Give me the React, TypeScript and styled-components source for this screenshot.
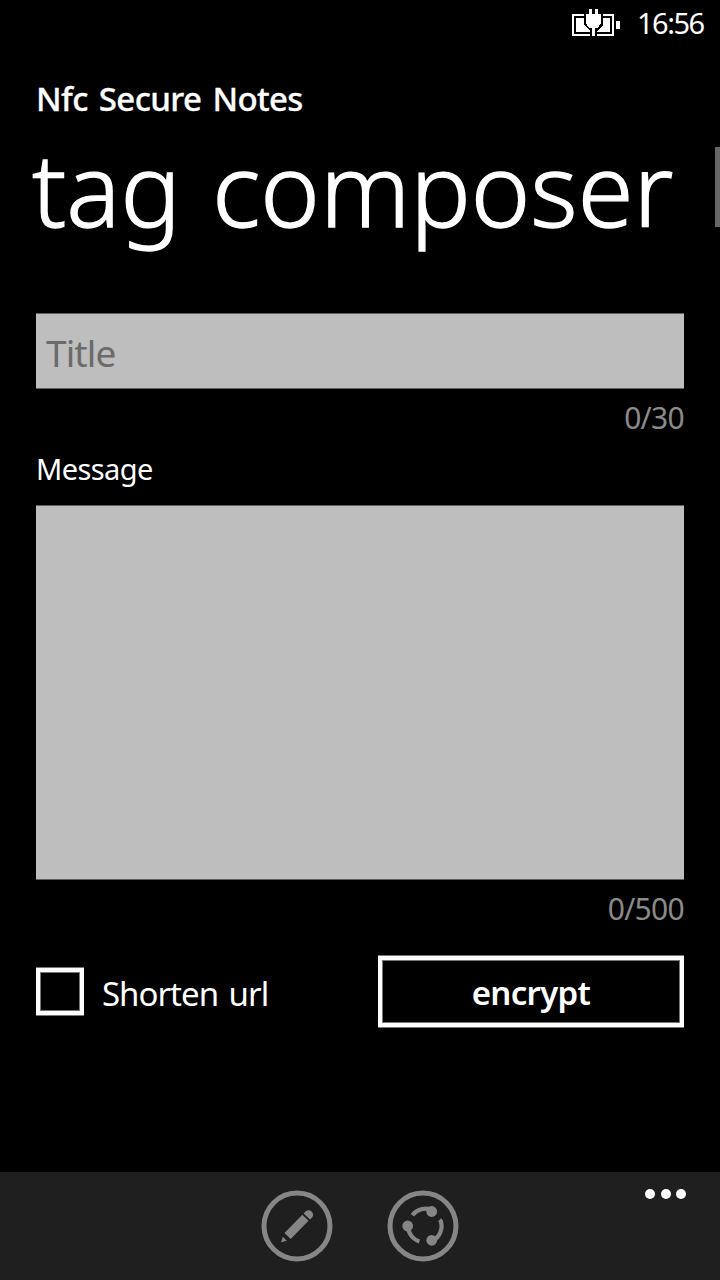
import React from "react";
import styled, { createGlobalStyle } from "styled-components";

const Global = createGlobalStyle`
  * { box-sizing: border-box; }
  body { margin: 0; background: #000; }
`;

const Page = styled.div`
  width: 720px;
  height: 1280px;
  display: flex;
  flex-direction: column;
  background: #000;
  color: #fff;
  overflow: hidden;
  font-family: "Noto Sans", "Open Sans", sans-serif;
  white-space: nowrap;
`;

const StatusBar = styled.header`
  display: flex;
  justify-content: flex-end;
  align-items: flex-start;
  height: 76px;
  padding-right: 16px;
`;

const BatteryIcon = styled.svg`
  display: block;
  margin: 8px 17px 0 0;
`;

const Clock = styled.time`
  width: 67px;
  font-size: 29px;
  line-height: 45px;
  letter-spacing: -1.5px;
`;

const AppName = styled.div`
  padding-left: 36px;
  font-size: 33px;
  font-weight: 500;
  line-height: 45px;
  letter-spacing: -0.6px;
  word-spacing: 3px;
  -webkit-text-stroke: 0.3px #fff;
`;

const TitleRow = styled.div`
  display: flex;
  justify-content: space-between;
  align-items: flex-start;
  height: 192px;
  padding-left: 32px;
`;

const PageTitle = styled.h1`
  margin: 2px 0 0;
  font-size: 101px;
  font-weight: 300;
  line-height: 130px;
  word-spacing: 5px;
  -webkit-text-stroke: 1.3px #fff;
`;

const NextPeek = styled.div`
  width: 5px;
  height: 80px;
  margin-top: 26px;
  background: #666;
`;

const Form = styled.main`
  flex: 1;
  display: flex;
  flex-direction: column;
  padding: 0 36px;
`;

const TitleInput = styled.input`
  width: 100%;
  height: 76px;
  padding: 2px 10px 0;
  border: solid #5f5f5f;
  border-width: 1px 0;
  border-radius: 0;
  background: #bebebe;
  color: #000;
  font: 37px "Noto Sans", sans-serif;
  letter-spacing: -0.9px;
  &::placeholder { color: #6b6b6b; opacity: 1; }
`;

const MessageInput = styled.textarea`
  display: block;
  width: 100%;
  height: 375px;
  border: solid #5f5f5f;
  border-width: 1px 0;
  border-radius: 0;
  background: #bebebe;
  resize: none;
`;

const Counter = styled.div`
  height: 56px;
  line-height: 58px;
  text-align: right;
  font-size: 30px;
  letter-spacing: -0.7px;
  color: #8a8a8a;
`;

const Label = styled.label`
  height: 60px;
  line-height: 48px;
  font-size: 29px;
  letter-spacing: -0.6px;
`;

const Actions = styled.div`
  display: flex;
  justify-content: space-between;
  align-items: center;
  height: 73px;
  margin-top: 19px;
`;

const CheckOption = styled.label`
  display: flex;
  align-items: center;
  gap: 18px;
`;

const CheckText = styled.span`
  padding-top: 4px;
  font-size: 33px;
  line-height: 44px;
  letter-spacing: -1px;
  word-spacing: 3px;
`;

const CheckBox = styled.span`
  width: 48px;
  height: 47px;
  border: 4px solid #fff;
  box-shadow: 0 -1px #777, 0 1px #777, inset 0 0 0 1px #777;
`;

const Button = styled.button`
  width: 306px;
  height: 71px;
  padding: 2px 0 0;
  border: 4px solid #fff;
  box-shadow: 0 -1px #777, 0 1px #777, inset 0 0 0 1px #777;
  background: #000;
  color: #fff;
  font: 600 33px "Noto Sans", sans-serif;
  letter-spacing: -0.7px;
`;

const AppBar = styled.footer`
  position: relative;
  display: flex;
  justify-content: center;
  gap: 54px;
  height: 108px;
  padding-top: 18px;
  background: #1f1f1f;
`;

const BarIcon = styled.svg`
  width: 72px;
  height: 72px;
`;

const More = styled.div`
  position: absolute;
  top: 17px;
  right: 34px;
  display: flex;
  gap: 5.5px;
`;

const Dot = styled.span`
  width: 10px;
  height: 10px;
  border-radius: 50%;
  background: #fff;
`;

const ICON = "#868686";

export default function App() {
  return (
    <Page>
      <Global />
      <StatusBar>
        <BatteryIcon width="50" height="30" viewBox="0 0 50 30" shapeRendering="crispEdges">
          <path d="M3 7h40v20H3z" fill="none" stroke="#fff" strokeWidth="2" />
          <path d="M6 10h34v14H6zM46 13h4v8h-4z" fill="#fff" />
          <path d="M14 4h19v13l-6 6v5h-7v-5l-6-6z" fill="#000" />
          <path d="M19 1h3v5h3V1h3v5h3v9l-3 5h-3v8h-3v-8h-3l-3-5V6h3z" fill="#fff" />
        </BatteryIcon>
        <Clock>16:56</Clock>
      </StatusBar>
      <AppName>Nfc Secure Notes</AppName>
      <TitleRow>
        <PageTitle>tag composer</PageTitle>
        <NextPeek />
      </TitleRow>
      <Form>
        <TitleInput placeholder="Title" />
        <Counter>0/30</Counter>
        <Label htmlFor="message">Message</Label>
        <MessageInput id="message" />
        <Counter>0/500</Counter>
        <Actions>
          <CheckOption>
            <CheckBox />
            <CheckText>Shorten url</CheckText>
          </CheckOption>
          <Button>encrypt</Button>
        </Actions>
      </Form>
      <AppBar>
        <BarIcon viewBox="0 0 72 72" fill={ICON}>
          <circle cx="36" cy="36" r="33" fill="none" stroke={ICON} strokeWidth="5" />
          <path d="M41.3 24.7l6.2 6L29.7 49l-6.2-6z" />
          <path d="M21.9 46.8l3.9 4L20 52.2z" />
          <path d="M42.6 23.4l2.4-2.4a4.6 4.6 0 0 1 6.4 6.2l-2.4 2.4z" />
        </BarIcon>
        <BarIcon viewBox="0 0 72 72" fill={ICON}>
          <circle cx="36" cy="36" r="33" fill="none" stroke={ICON} strokeWidth="5" />
          <circle cx="44.7" cy="21.5" r="5.4" />
          <circle cx="20.7" cy="36" r="5.4" />
          <circle cx="44.7" cy="50.3" r="5.4" />
          <g fill="none" stroke={ICON} strokeWidth="4.2">
            <path d="M44.7 19.8A16.8 16.8 0 0 0 25.4 25.2" />
            <path d="M20.9 36A16.8 16.8 0 0 0 32.4 51.6" />
            <path d="M44.7 51.3A16.8 16.8 0 0 0 53.6 30.5" />
          </g>
          <path d="M50.9 31.4l3.5-3.4 1.4 3.4z" />
        </BarIcon>
        <More><Dot /><Dot /><Dot /></More>
      </AppBar>
    </Page>
  );
}
